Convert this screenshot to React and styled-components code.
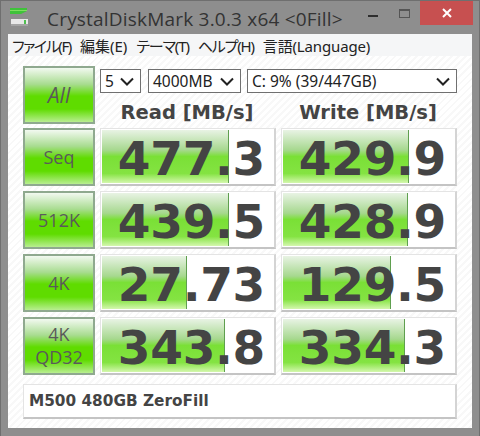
import styled, { createGlobalStyle } from "styled-components";

const Global = createGlobalStyle`
  html, body {
    margin: 0;
    padding: 0;
  }
  body {
    width: 480px;
    height: 436px;
    overflow: hidden;
    font-family: "Noto Sans", "Noto Sans CJK JP", sans-serif;
  }
`;

const Win = styled.div`
  box-sizing: border-box;
  width: 480px;
  height: 436px;
  padding: 0 7px 8px;
  background: #8e8e8e;
  border: 1px solid #6f6f6f;
  border-width: 1px 1px 0;
  display: flex;
  flex-direction: column;
`;

const TitleBar = styled.div`
  height: 33px;
  flex: none;
  display: flex;
  align-items: flex-start;
  color: #333;
`;

const Logo = styled.svg`
  width: 20px;
  height: 20px;
  margin: 6px 0 0 1px;
  flex: none;
`;

const Title = styled.div`
  margin: 3px 0 0 18px;
  font-family: "Open Sans", sans-serif;
  font-size: 19px;
  line-height: 30px;
  letter-spacing: 0.2px;
  white-space: nowrap;
  color: #333;
`;

const WinBtns = styled.div`
  margin-left: auto;
  display: flex;
  margin-right: -1px;
`;

const MinBtn = styled.div`
  width: 10px;
  height: 2px;
  margin: 14px 0 0 0;
  background: #2e2e2e;
`;

const MaxBtn = styled.div`
  box-sizing: border-box;
  width: 11px;
  height: 9px;
  margin: 8px 10px 0 21px;
  border: 1px solid #555;
  border-top-width: 2px;
`;

const CloseBtn = styled.div`
  width: 53px;
  height: 24px;
  background: #c75050;
  color: #fff;
  display: flex;
  align-items: center;
  justify-content: center;
`;

const Client = styled.div`
  flex: 1;
  display: flex;
  flex-direction: column;
  background: #fff;
`;

const MenuBar = styled.div`
  height: 22px;
  flex: none;
  display: flex;
  gap: 9px;
  padding-left: 4px;
  align-items: center;
  background: #f5f6f7;
  font-size: 15px;
  font-feature-settings: "palt";
  color: #222;
  white-space: nowrap;
`;

const MenuItem = styled.span`
  letter-spacing: ${(p) => p.$ls || 0}px;
`;

const Body = styled.div`
  flex: 1;
  box-sizing: border-box;
  padding: 10px 15px 0 15px;
  background: repeating-linear-gradient(135deg, #fff 0 3px, #f8f8f8 3px 5px);
  display: grid;
  grid-template-columns: 72px 176px 176px;
  grid-template-rows: 57px repeat(4, 58px);
  column-gap: 5px;
  row-gap: 5px;
`;

const GreenBtn = styled.div`
  box-sizing: border-box;
  height: 58px;
  border: 2px solid #8fa98f;
  background: linear-gradient(
    #f2f9f0 0%,
    #a8dc90 30%,
    #5fdc00 52%,
    #5fdc00 76%,
    #b8ee90 100%
  );
  display: flex;
  flex-direction: column;
  align-items: center;
  justify-content: center;
  color: #5a5a5a;
  font-size: ${(p) => p.$size || 18}px;
  line-height: 23px;
  font-style: ${(p) => (p.$italic ? "italic" : "normal")};
  font-family: "Open Sans", sans-serif;
`;

const Controls = styled.div`
  grid-column: 2 / 4;
  display: flex;
  flex-direction: column;
`;

const SelectRow = styled.div`
  display: flex;
  margin-top: 3px;
`;

const Select = styled.div`
  box-sizing: border-box;
  width: ${(p) => p.$w}px;
  height: 24px;
  flex: none;
  margin-right: ${(p) => p.$gap || 0}px;
  display: flex;
  align-items: center;
  justify-content: space-between;
  padding: 0 6px 0 4px;
  border: 1px solid #707070;
  background: #fff;
  font-size: 15.5px;
  color: #222;
`;

const Heads = styled.div`
  display: grid;
  grid-template-columns: 176px 176px;
  column-gap: 5px;
  margin: 5px 0 0 -1px;
`;

const Head = styled.div`
  text-align: center;
  font-family: "DejaVu Sans", sans-serif;
  font-weight: 700;
  font-size: 19.5px;
  line-height: 30px;
  color: #444;
`;

const Meter = styled.div`
  box-sizing: border-box;
  position: relative;
  height: 58px;
  background: #fff;
  border: 1px solid #e4e4e4;
  border-bottom: 2px solid #c4c4c4;
  border-right: 2px solid #d4d4d4;
  overflow: hidden;
`;

const Fill = styled.div`
  position: absolute;
  left: 1px;
  top: 1px;
  bottom: 1px;
  border-right: 1px solid #5f9f4f;
  background: linear-gradient(
    #e8f3e4 0%,
    #a6d88e 38%,
    #7ae036 50%,
    #84e342 82%,
    #d4f7ae 100%
  );
`;

const Value = styled.div`
  position: absolute;
  right: 9px;
  top: 0;
  bottom: 0;
  padding-top: 4px;
  display: flex;
  align-items: center;
  font-family: "DejaVu Sans", sans-serif;
  font-weight: 700;
  font-size: 47px;
  letter-spacing: -0.3px;
  color: #444;
`;

const Comment = styled.div`
  grid-column: 1 / 4;
  box-sizing: border-box;
  height: 35px;
  margin-top: 4px;
  padding-left: 5px;
  display: flex;
  align-items: center;
  background: #fff;
  border: 1px solid #e4e4e4;
  border-bottom: 2px solid #c4c4c4;
  border-right: 2px solid #d4d4d4;
  font-family: "DejaVu Sans", sans-serif;
  font-weight: 700;
  font-size: 15.3px;
  color: #444;
`;

const Chevron = () => (
  <svg width="14" height="9" viewBox="0 0 14 9">
    <path d="M1 1.5 7 7.5 13 1.5" fill="none" stroke="#222" strokeWidth="2" />
  </svg>
);

const rows = [
  { label: ["Seq"], read: "477.3", rw: 126, write: "429.9", ww: 125 },
  { label: ["512K"], read: "439.5", rw: 126, write: "428.9", ww: 124 },
  { label: ["4K"], read: "27.73", rw: 84, write: "129.5", ww: 107 },
  { label: ["4K", "QD32"], read: "343.8", rw: 122, write: "334.3", ww: 121 },
];

export default function App() {
  return (
    <>
      <Global />
      <Win>
        <TitleBar>
          <Logo viewBox="0 0 20 20">
            <path d="M1 1h17v3l-6 3H1z" fill="#3fc23a" />
            <path d="M1 3h17v1H1z" fill="#7ee060" />
            <path d="M2 12h17v7H2z" fill="#e8e8e8" />
            <path d="M2 17h17v2H2z" fill="#a4a4a4" />
            <path d="M15 13h2v4h-2z" fill="#4fc04f" />
          </Logo>
          <Title>CrystalDiskMark 3.0.3 x64 &lt;0Fill&gt;</Title>
          <WinBtns>
            <MinBtn />
            <MaxBtn />
            <CloseBtn>
              <svg width="10" height="10" viewBox="0 0 10 10">
                <path d="M1 1 9 9M9 1 1 9" stroke="#fff" strokeWidth="2" />
              </svg>
            </CloseBtn>
          </WinBtns>
        </TitleBar>
        <Client>
          <MenuBar>
            <MenuItem $ls={-1.4}>ファイル(F)</MenuItem>
            <MenuItem>編集(E)</MenuItem>
            <MenuItem $ls={-1.1}>テーマ(T)</MenuItem>
            <MenuItem $ls={-1.2}>ヘルプ(H)</MenuItem>
            <MenuItem $ls={-0.15}>言語(Language)</MenuItem>
          </MenuBar>
          <Body>
            <GreenBtn $italic $size={21}>All</GreenBtn>
            <Controls>
              <SelectRow>
                <Select $w={41} $gap={7}>5<Chevron /></Select>
                <Select $w={93} $gap={6}>4000MB<Chevron /></Select>
                <Select $w={210}>C: 9% (39/447GB)<Chevron /></Select>
              </SelectRow>
              <Heads>
                <Head>Read [MB/s]</Head>
                <Head>Write [MB/s]</Head>
              </Heads>
            </Controls>
            {rows.map((r) => (
              <Row key={r.read} {...r} />
            ))}
            <Comment>M500 480GB ZeroFill</Comment>
          </Body>
        </Client>
      </Win>
    </>
  );
}

function Row({ label, read, rw, write, ww }) {
  return (
    <>
      <GreenBtn>
        {label.map((l) => (
          <span key={l}>{l}</span>
        ))}
      </GreenBtn>
      <Meter>
        <Fill style={{ width: rw }} />
        <Value>{read}</Value>
      </Meter>
      <Meter>
        <Fill style={{ width: ww }} />
        <Value>{write}</Value>
      </Meter>
    </>
  );
}
